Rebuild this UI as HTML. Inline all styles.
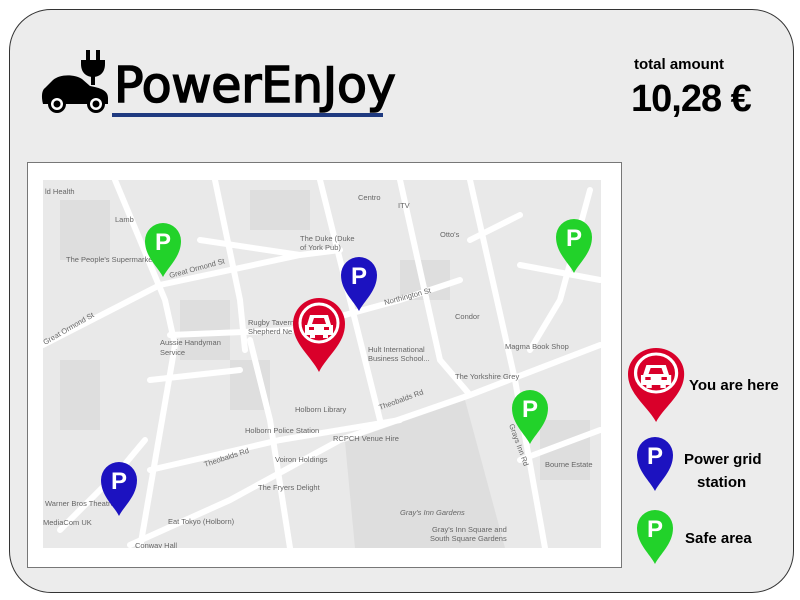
<!DOCTYPE html>
<html><head><meta charset="utf-8"><style>
body{margin:0;width:800px;height:600px;background:#fff;position:relative;overflow:hidden;font-family:"Liberation Sans",sans-serif}
.card{position:absolute;left:9px;top:9px;width:783px;height:582px;border:1.5px solid #333;border-radius:42px;background:#ececec}
.t{position:absolute;color:#000;font-weight:bold;white-space:nowrap}
</style></head><body>
<div class="card"></div>
<!-- logo car -->
<svg style="position:absolute;left:40px;top:48px" width="72" height="66" viewBox="0 0 72 66">
<rect x="46" y="2" width="4" height="10" fill="#000"/><rect x="56" y="2" width="4" height="10" fill="#000"/>
<path d="M41 12 H65 V16 C65 26 58 29 53 29 C48 29 41 26 41 16Z" fill="#000"/>
<rect x="51" y="28" width="4" height="9" fill="#000"/>
<path d="M3 56 C1 48 2 42 5 40 L13 32 C20 26 34 26 42 31 L50 38 C60 40 68 42 68 50 L68 56Z" fill="#000"/>
<circle cx="17" cy="56" r="9" fill="#000"/><circle cx="17" cy="56" r="6" fill="#fff"/><circle cx="17" cy="56" r="3.5" fill="#000"/>
<circle cx="56" cy="56" r="9" fill="#000"/><circle cx="56" cy="56" r="6" fill="#fff"/><circle cx="56" cy="56" r="3.5" fill="#000"/>
</svg>
<div class="t" style="left:114px;top:58px;font-size:49px;font-family:'DejaVu Sans',sans-serif;font-weight:normal;letter-spacing:-0.2px;line-height:56px;-webkit-text-stroke:1.6px #000">PowerEnJoy</div>
<div style="position:absolute;left:112px;top:113px;width:271px;height:4px;background:#1f3a80"></div>
<div class="t" style="left:634px;top:56px;font-size:15px">total amount</div>
<div class="t" style="left:631px;top:78px;font-size:38px;letter-spacing:-1px">10,28 €</div>
<!-- map frame -->
<div style="position:absolute;left:27px;top:162px;width:593px;height:404px;border:1px solid #777;background:#fff"></div>
<svg style="position:absolute;left:43px;top:180px" width="558" height="368" viewBox="43 180 558 368" font-family="Liberation Sans,sans-serif" font-size="7.5" fill="#666">
<rect x="43" y="180" width="558" height="368" fill="#e9e9e9"/>
<g fill="#dedede">
<rect x="60" y="200" width="50" height="60"/><rect x="250" y="190" width="60" height="40"/><rect x="180" y="300" width="50" height="60"/><rect x="400" y="260" width="50" height="40"/><rect x="60" y="360" width="40" height="70"/><rect x="230" y="360" width="40" height="50"/><rect x="540" y="420" width="50" height="60"/>
<polygon points="345,442 465,400 505,548 355,548"/>
</g>
<g stroke="#fff" stroke-width="6" fill="none" stroke-linecap="round">
<polyline points="43,345 160,285 300,255 340,250"/>
<polyline points="130,545 230,500 340,440 470,395 600,345"/>
<polyline points="115,180 165,300 175,345 140,548"/>
<polyline points="215,180 240,300 245,350"/>
<polyline points="320,180 360,340 380,420"/>
<polyline points="400,180 440,360 470,395"/>
<polyline points="470,180 515,380 545,548"/>
<polyline points="590,190 560,300 530,350"/>
<polyline points="200,240 300,255"/>
<polyline points="170,335 290,330 400,300 460,280"/>
<polyline points="60,530 120,470 145,440"/>
<polyline points="250,340 270,420 290,548"/>
<polyline points="150,380 240,370"/>
<polyline points="520,265 600,280"/>
<polyline points="470,240 520,215"/>
<polyline points="520,460 600,430"/>
<polyline points="150,470 280,440 400,420"/>
</g>
<text x="45" y="194">ld Health</text><text x="115" y="222">Lamb</text><text x="66" y="262">The People's Supermarke</text>
<text x="300" y="241">The Duke (Duke</text><text x="300" y="250">of York Pub)</text><text x="358" y="200">Centro</text><text x="398" y="208">ITV</text>
<text x="440" y="237">Otto's</text><text x="455" y="319">Condor</text><text x="505" y="349">Magma Book Shop</text>
<text x="248" y="325">Rugby Tavern</text><text x="248" y="334">Shepherd Ne</text><text x="160" y="345">Aussie Handyman</text><text x="160" y="355">Service</text>
<text x="368" y="352">Hult International</text><text x="368" y="361">Business School...</text><text x="455" y="379">The Yorkshire Grey</text>
<text x="295" y="412">Holborn Library</text><text x="245" y="433">Holborn Police Station</text><text x="333" y="441">RCPCH Venue Hire</text>
<text x="275" y="462">Voiron Holdings</text><text x="258" y="490">The Fryers Delight</text><text x="400" y="515" font-style="italic">Gray's Inn Gardens</text>
<text x="432" y="532">Gray's Inn Square and</text><text x="430" y="541">South Square Gardens</text><text x="545" y="467">Bourne Estate</text>
<text x="45" y="506">Warner Bros Theatre</text><text x="43" y="525">MediaCom UK</text><text x="168" y="524">Eat Tokyo (Holborn)</text><text x="135" y="548">Conway Hall</text>
<text x="205" y="467" transform="rotate(-18 205 467)">Theobalds Rd</text><text x="380" y="410" transform="rotate(-20 380 410)">Theobalds Rd</text>
<text x="170" y="278" transform="rotate(-15 170 278)">Great Ormond St</text><text x="45" y="345" transform="rotate(-30 45 345)">Great Ormond St</text>
<text x="385" y="305" transform="rotate(-15 385 305)">Northington St</text><text x="509" y="425" transform="rotate(70 509 425)">Grays Inn Rd</text>
</g>
<defs>
<g id="pin"><path d="M18 54 C13 44 0 34 0 18 A18 18 0 0 1 36 18 C36 34 23 44 18 54Z"/><text x="18" y="27" text-anchor="middle" font-family="Liberation Sans,sans-serif" font-weight="bold" font-size="24" fill="#fff">P</text></g>
<g id="rpin"><path d="M26 74 C18 58 0 46 0 26 A26 26 0 0 1 52 26 C52 46 34 58 26 74Z" fill="#d9002a"/><circle cx="26" cy="25" r="19" fill="none" stroke="#fff" stroke-width="3"/>
<path d="M14 27 L17 17 H35 L38 27 H40 V37 H35 V40 H30 V37 H22 V40 H17 V37 H12 V27Z" fill="#fff"/><rect x="16" y="29" width="5" height="3" fill="#d9002a"/><rect x="31" y="29" width="5" height="3" fill="#d9002a"/><path d="M19 26 L21 20 H31 L33 26Z" fill="#d9002a"/></g>
</defs>
<use href="#pin" x="145" y="223" fill="#22d22a"/>
<use href="#pin" x="556" y="219" fill="#22d22a"/>
<use href="#pin" x="512" y="390" fill="#22d22a"/>
<use href="#pin" x="341" y="257" fill="#1c12c0"/>
<use href="#pin" x="101" y="462" fill="#1c12c0"/>
<use href="#rpin" x="293" y="298"/>
</svg>
<svg style="position:absolute;left:626px;top:346px" width="60" height="220" viewBox="626 346 60 220">
<use href="#rpin" transform="translate(628 348) scale(1.08 1)"/>
<use href="#pin" x="637" y="437" fill="#1c12c0"/>
<use href="#pin" x="637" y="510" fill="#22d22a"/>
</svg>
<div class="t" style="left:689px;top:377px;font-size:15px">You are here</div>
<div class="t" style="left:684px;top:451px;font-size:15px">Power grid</div>
<div class="t" style="left:697px;top:474px;font-size:15px">station</div>
<div class="t" style="left:685px;top:530px;font-size:15px">Safe area</div>
</body></html>
